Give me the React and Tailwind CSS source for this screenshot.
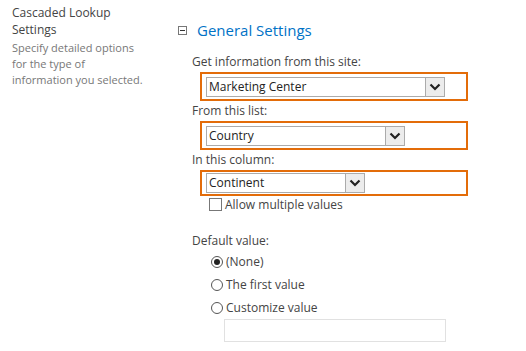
import React from "react";

function Chevron() {
  return (
    <svg width="12" height="8" viewBox="0 0 12 8">
      <path d="M1.5 1.5 L6 6 L10.5 1.5" fill="none" stroke="#222" strokeWidth="2.2" />
    </svg>
  );
}

function Select({ value, width }) {
  return (
    <div className={`flex h-[20px] border border-[#ababab] bg-white ${width}`}>
      <div className="flex-1 px-[2px] text-[12px] leading-[18px] text-[#222] truncate">{value}</div>
      <div className="flex w-[19px] items-center justify-center border-l border-[#ababab] bg-[#ececec]">
        <Chevron />
      </div>
    </div>
  );
}

function Field({ label, value, width, pad }) {
  return (
    <div>
      <div className="h-[20px] text-[12px] leading-[20px] text-[#444]">{label}</div>
      <div className={`ml-[8px] w-[268px] border-2 border-[#e36c09] px-[4px] ${pad}`}>
        <Select value={value} width={width} />
      </div>
    </div>
  );
}

function Radio({ checked, label }) {
  return (
    <div className="flex h-[23px] items-center gap-[3px]">
      <div className="flex h-[12px] w-[12px] items-center justify-center rounded-full border border-[#555] bg-white">
        {checked && <div className="h-[6px] w-[6px] rounded-full bg-[#222]" />}
      </div>
      <span className="text-[12px] text-[#444]">{label}</span>
    </div>
  );
}

export default function App() {
  return (
    <div className="flex h-[351px] w-[526px] bg-white font-['Open_Sans',sans-serif]">
      <div className="w-[178px] shrink-0 pl-[12px] pt-[4px]">
        <div className="text-[12px] leading-[17px] text-[#444]">
          Cascaded Lookup
          <br />
          Settings
        </div>
        <div className="mt-[2px] whitespace-nowrap text-[11px] leading-[16px] text-[#777]">
          Specify detailed options
          <br />
          for the type of
          <br />
          information you selected.
        </div>
      </div>
      <div className="flex-1 pt-[19px]">
        <div className="flex items-center gap-[10px]">
          <div className="flex h-[9px] w-[9px] items-center justify-center border border-[#777]">
            <div className="h-px w-[5px] bg-[#333]" />
          </div>
          <div className="text-[15px] leading-[22px] text-[#0072c6]">General Settings</div>
        </div>
        <div className="ml-[14px] mt-[11px] flex flex-col">
          <Field label="Get information from this site:" value="Marketing Center" width="w-[239px]" pad="pt-[3px] pb-[2px]" />
          <Field label="From this list:" value="Country" width="w-[199px]" pad="pt-[3px] pb-[2px]" />
          <Field label="In this column:" value="Continent" width="w-[159px]" pad="pt-[1px] pb-[1px]" />
        </div>
        <div className="ml-[31px] mt-[2px] flex h-[13px] items-center gap-[3px]">
          <div className="h-[13px] w-[13px] border border-[#777] bg-white" />
          <span className="text-[12px] leading-[16px] text-[#444]">Allow multiple values</span>
        </div>
        <div className="ml-[14px] mt-[21px] text-[12px] leading-[18px] text-[#444]">Default value:</div>
        <div className="ml-[33px]">
          <Radio checked label="(None)" />
          <Radio label="The first value" />
          <Radio label="Customize value" />
          <div className="ml-[13px] h-[23px] w-[222px] border border-[#e1e1e1] bg-white" />
        </div>
      </div>
    </div>
  );
}
